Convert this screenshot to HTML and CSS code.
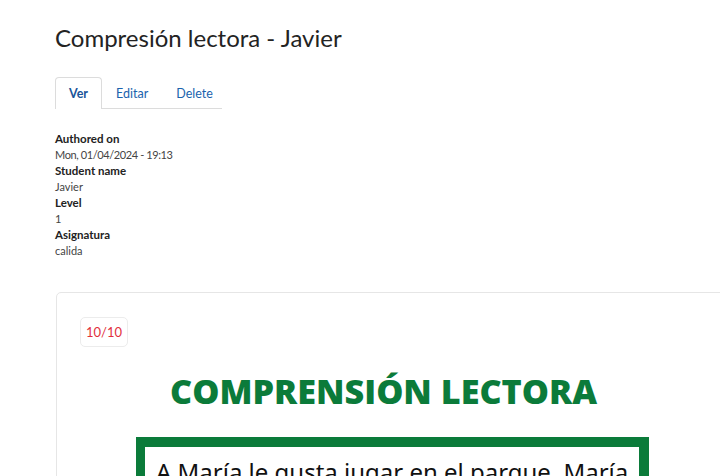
FILE: index.html
```html
<!DOCTYPE html>
<html lang="es">
<head>
<meta charset="utf-8">
<title>Compresión lectora - Javier</title>
<link rel="stylesheet" href="styles.css">
</head>
<body>
<main class="page">
  <h1 class="page-title">Compresión lectora - Javier</h1>
  <nav class="tabs">
    <a class="tab active" href="#">Ver</a>
    <a class="tab" href="#">Editar</a>
    <a class="tab" href="#">Delete</a>
  </nav>
  <dl class="meta">
    <dt>Authored on</dt>
    <dd class="date">Mon, 01/04/2024 - 19:13</dd>
    <dt>Student name</dt>
    <dd>Javier</dd>
    <dt>Level</dt>
    <dd>1</dd>
    <dt>Asignatura</dt>
    <dd>calida</dd>
  </dl>
  <section class="card">
    <span class="score">10/10</span>
    <div class="sheet">
      <h2 class="sheet-title">COMPRENSIÓN LECTORA</h2>
      <div class="sheet-box">
        <p class="sheet-text">A María le gusta jugar en el parque. María</p>
      </div>
    </div>
  </section>
</main>
</body>
</html>
```
FILE: styles.css
```css
html, body {
  margin: 0;
  padding: 0;
  overflow: hidden;
  background: #fff;
}
body {
  font-family: Lato, "Open Sans", sans-serif;
  color: #222;
}
.page {
  padding: 23px 0 0 55px;
  width: 760px;
}
.page-title {
  margin: 0;
  font-size: 24px;
  line-height: 29px;
  font-weight: 400;
  color: #232323;
}
.tabs {
  display: flex;
  margin-top: 25px;
  width: 167px;
  border-bottom: 1px solid #dcdcdc;
  height: 31px;
}
.tab {
  display: flex;
  align-items: center;
  padding: 0 13px;
  font-size: 12.5px;
  color: #1a63ad;
  text-decoration: none;
  border: 1px solid transparent;
  border-bottom: none;
  border-radius: 4px 4px 0 0;
}
.tab.active {
  font-weight: 700;
  color: #1a5499;
  border-color: #dcdcdc;
  background: #fff;
  margin-bottom: -1px;
  height: 31px;
}
.meta {
  margin: 22px 0 0;
  font-size: 11.5px;
  line-height: 16px;
}
.meta dt {
  font-weight: 700;
  color: #222;
}
.meta dd {
  margin: 0;
  font-size: 11px;
  color: #444;
}
.meta .date {
  letter-spacing: -0.4px;
}
.card {
  margin-top: 33px;
  margin-left: 1px;
  border: 1px solid #e6e6e6;
  border-radius: 5px;
  padding: 24px 0 0 23px;
  height: 400px;
}
.score {
  display: inline-block;
  border: 1px solid #ececec;
  border-radius: 5px;
  padding: 0 5px;
  line-height: 28px;
  font-size: 13px;
  color: #e2303c;
}
.sheet {
  display: flex;
  flex-direction: column;
  align-items: flex-start;
}
.sheet-title {
  margin: 19px 0 0 90px;
  font-family: "Open Sans", sans-serif;
  font-weight: 800;
  font-size: 34.2px;
  line-height: 50px;
  color: #0b7b3a;
}
.sheet-box {
  margin: 21px 0 0 56px;
  width: 472px;
  height: 120px;
  border: 10px solid #0b7b3a;
  border-left-width: 9px;
  padding: 0 11px;
}
.sheet-text {
  margin: 8px 0 0;
  font-family: "Noto Sans", sans-serif;
  font-size: 24px;
  line-height: 34px;
  color: #111;
  white-space: nowrap;
}
```
